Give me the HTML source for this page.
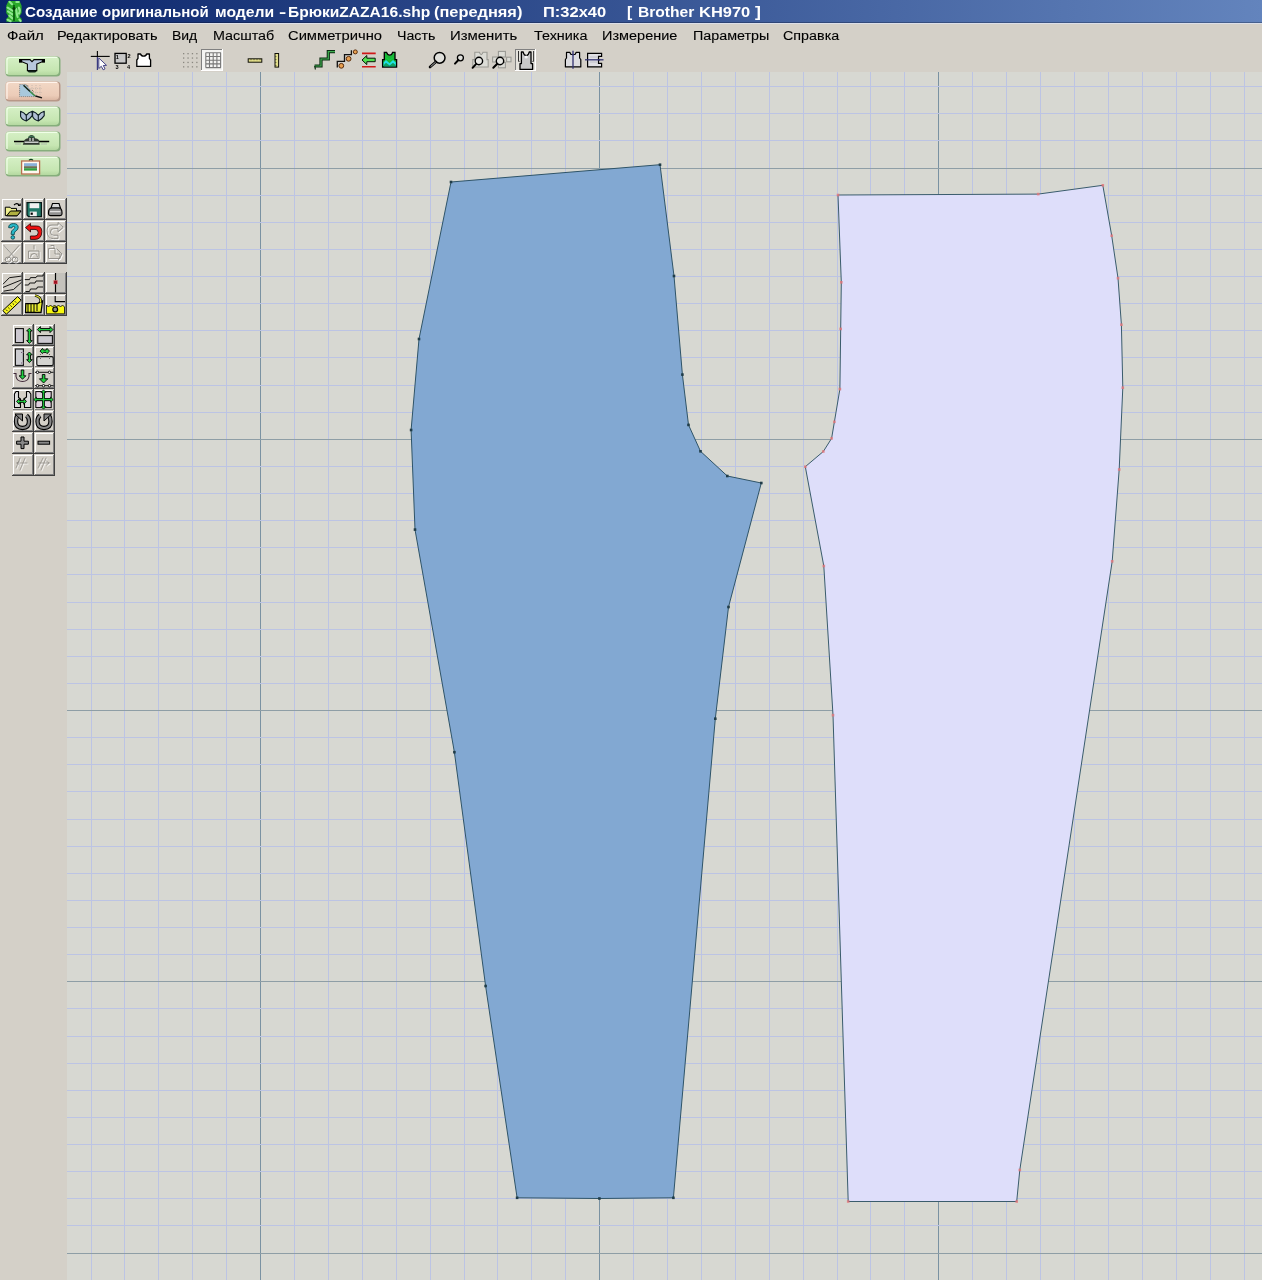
<!DOCTYPE html>
<html><head><meta charset="utf-8">
<style>
html,body{margin:0;padding:0;}
body{width:1262px;height:1280px;overflow:hidden;position:relative;background:#d4d0c8;font-family:"Liberation Sans",sans-serif;}
.abs{position:absolute;}
#title{left:0;top:0;width:1262px;height:22px;background:linear-gradient(to right,#0a246a 0%,#6384bd 100%);}
#tline{left:0;top:22px;width:1262px;height:1px;background:linear-gradient(to right,#081a50,#46608e);}
#tline2{left:0;top:23px;width:1262px;height:1px;background:#dcdfe8;}
#canvas{left:67px;top:72px;width:1195px;height:1208px;background:#d7d8d2;}
</style></head><body>
<div id="title" class="abs"></div>
<div id="tline" class="abs"></div><div id="tline2" class="abs"></div>
<div style="position:absolute;left:24.72px;top:5px;font-size:14px;font-weight:bold;line-height:1;white-space:pre;color:#fff;transform-origin:0 0;transform:scaleX(1.0833);will-change:transform;">Создание</div>
<div style="position:absolute;left:102.40px;top:5px;font-size:14px;font-weight:bold;line-height:1;white-space:pre;color:#fff;transform-origin:0 0;transform:scaleX(1.0717);will-change:transform;">оригинальной</div>
<div style="position:absolute;left:214.58px;top:5px;font-size:14px;font-weight:bold;line-height:1;white-space:pre;color:#fff;transform-origin:0 0;transform:scaleX(1.1235);will-change:transform;">модели</div>
<div style="position:absolute;left:279.30px;top:5px;font-size:14px;font-weight:bold;line-height:1;white-space:pre;color:#fff;transform-origin:0 0;transform:scaleX(1.5500);will-change:transform;">-</div>
<div style="position:absolute;left:288.49px;top:5px;font-size:14px;font-weight:bold;line-height:1;white-space:pre;color:#fff;transform-origin:0 0;transform:scaleX(1.1119);will-change:transform;">БрюкиZAZA16.shp</div>
<div style="position:absolute;left:433.63px;top:5px;font-size:14px;font-weight:bold;line-height:1;white-space:pre;color:#fff;transform-origin:0 0;transform:scaleX(1.1689);will-change:transform;">(передняя)</div>
<div style="position:absolute;left:542.82px;top:5px;font-size:14px;font-weight:bold;line-height:1;white-space:pre;color:#fff;transform-origin:0 0;transform:scaleX(1.1769);will-change:transform;">П:32x40</div>
<div style="position:absolute;left:627.38px;top:5px;font-size:14px;font-weight:bold;line-height:1;white-space:pre;color:#fff;transform-origin:0 0;transform:scaleX(1.1250);will-change:transform;">[</div>
<div style="position:absolute;left:638.09px;top:5px;font-size:14px;font-weight:bold;line-height:1;white-space:pre;color:#fff;transform-origin:0 0;transform:scaleX(1.1143);will-change:transform;">Brother</div>
<div style="position:absolute;left:698.82px;top:5px;font-size:14px;font-weight:bold;line-height:1;white-space:pre;color:#fff;transform-origin:0 0;transform:scaleX(1.1762);will-change:transform;">KH970</div>
<div style="position:absolute;left:754.60px;top:5px;font-size:14px;font-weight:bold;line-height:1;white-space:pre;color:#fff;transform-origin:0 0;transform:scaleX(1.2750);will-change:transform;">]</div>
<div style="position:absolute;left:6.55px;top:30px;font-size:12px;font-weight:normal;line-height:1;white-space:pre;color:#000;transform-origin:0 0;transform:scaleX(1.2464);will-change:transform;-webkit-text-stroke:0.1px #000">Файл</div>
<div style="position:absolute;left:57.19px;top:30px;font-size:12px;font-weight:normal;line-height:1;white-space:pre;color:#000;transform-origin:0 0;transform:scaleX(1.2122);will-change:transform;-webkit-text-stroke:0.1px #000">Редактировать</div>
<div style="position:absolute;left:172.34px;top:30px;font-size:12px;font-weight:normal;line-height:1;white-space:pre;color:#000;transform-origin:0 0;transform:scaleX(1.1619);will-change:transform;-webkit-text-stroke:0.1px #000">Вид</div>
<div style="position:absolute;left:212.71px;top:30px;font-size:12px;font-weight:normal;line-height:1;white-space:pre;color:#000;transform-origin:0 0;transform:scaleX(1.1920);will-change:transform;-webkit-text-stroke:0.1px #000">Масштаб</div>
<div style="position:absolute;left:287.97px;top:30px;font-size:12px;font-weight:normal;line-height:1;white-space:pre;color:#000;transform-origin:0 0;transform:scaleX(1.2280);will-change:transform;-webkit-text-stroke:0.1px #000">Симметрично</div>
<div style="position:absolute;left:396.62px;top:30px;font-size:12px;font-weight:normal;line-height:1;white-space:pre;color:#000;transform-origin:0 0;transform:scaleX(1.1839);will-change:transform;-webkit-text-stroke:0.1px #000">Часть</div>
<div style="position:absolute;left:449.76px;top:30px;font-size:12px;font-weight:normal;line-height:1;white-space:pre;color:#000;transform-origin:0 0;transform:scaleX(1.2434);will-change:transform;-webkit-text-stroke:0.1px #000">Изменить</div>
<div style="position:absolute;left:533.60px;top:30px;font-size:12px;font-weight:normal;line-height:1;white-space:pre;color:#000;transform-origin:0 0;transform:scaleX(1.1978);will-change:transform;-webkit-text-stroke:0.1px #000">Техника</div>
<div style="position:absolute;left:601.99px;top:30px;font-size:12px;font-weight:normal;line-height:1;white-space:pre;color:#000;transform-origin:0 0;transform:scaleX(1.2082);will-change:transform;-webkit-text-stroke:0.1px #000">Измерение</div>
<div style="position:absolute;left:692.71px;top:30px;font-size:12px;font-weight:normal;line-height:1;white-space:pre;color:#000;transform-origin:0 0;transform:scaleX(1.1935);will-change:transform;-webkit-text-stroke:0.1px #000">Параметры</div>
<div style="position:absolute;left:782.91px;top:30px;font-size:12px;font-weight:normal;line-height:1;white-space:pre;color:#000;transform-origin:0 0;transform:scaleX(1.1935);will-change:transform;-webkit-text-stroke:0.1px #000">Справка</div>
<div id="canvas" class="abs"><svg width="1195" height="1208" style="position:absolute;left:0;top:0">
<g shape-rendering="crispEdges"><rect x="24" y="0" width="1" height="1208" fill="#bcc4e4"/>
<rect x="57" y="0" width="1" height="1208" fill="#bcc4e4"/>
<rect x="91" y="0" width="1" height="1208" fill="#bcc4e4"/>
<rect x="125" y="0" width="1" height="1208" fill="#bcc4e4"/>
<rect x="159" y="0" width="1" height="1208" fill="#bcc4e4"/>
<rect x="193" y="0" width="1" height="1208" fill="#7a92a2"/>
<rect x="227" y="0" width="1" height="1208" fill="#bcc4e4"/>
<rect x="261" y="0" width="1" height="1208" fill="#bcc4e4"/>
<rect x="295" y="0" width="1" height="1208" fill="#bcc4e4"/>
<rect x="329" y="0" width="1" height="1208" fill="#bcc4e4"/>
<rect x="363" y="0" width="1" height="1208" fill="#bcc4e4"/>
<rect x="397" y="0" width="1" height="1208" fill="#bcc4e4"/>
<rect x="430" y="0" width="1" height="1208" fill="#bcc4e4"/>
<rect x="464" y="0" width="1" height="1208" fill="#bcc4e4"/>
<rect x="498" y="0" width="1" height="1208" fill="#bcc4e4"/>
<rect x="532" y="0" width="1" height="1208" fill="#7a92a2"/>
<rect x="566" y="0" width="1" height="1208" fill="#bcc4e4"/>
<rect x="600" y="0" width="1" height="1208" fill="#bcc4e4"/>
<rect x="634" y="0" width="1" height="1208" fill="#bcc4e4"/>
<rect x="668" y="0" width="1" height="1208" fill="#bcc4e4"/>
<rect x="702" y="0" width="1" height="1208" fill="#bcc4e4"/>
<rect x="736" y="0" width="1" height="1208" fill="#bcc4e4"/>
<rect x="770" y="0" width="1" height="1208" fill="#bcc4e4"/>
<rect x="803" y="0" width="1" height="1208" fill="#bcc4e4"/>
<rect x="837" y="0" width="1" height="1208" fill="#bcc4e4"/>
<rect x="871" y="0" width="1" height="1208" fill="#7a92a2"/>
<rect x="905" y="0" width="1" height="1208" fill="#bcc4e4"/>
<rect x="939" y="0" width="1" height="1208" fill="#bcc4e4"/>
<rect x="973" y="0" width="1" height="1208" fill="#bcc4e4"/>
<rect x="1007" y="0" width="1" height="1208" fill="#bcc4e4"/>
<rect x="1041" y="0" width="1" height="1208" fill="#bcc4e4"/>
<rect x="1075" y="0" width="1" height="1208" fill="#bcc4e4"/>
<rect x="1109" y="0" width="1" height="1208" fill="#bcc4e4"/>
<rect x="1143" y="0" width="1" height="1208" fill="#bcc4e4"/>
<rect x="1177" y="0" width="1" height="1208" fill="#bcc4e4"/>
<rect x="0" y="14" width="1195" height="1" fill="#bcc4e4"/>
<rect x="0" y="41" width="1195" height="1" fill="#bcc4e4"/>
<rect x="0" y="68" width="1195" height="1" fill="#bcc4e4"/>
<rect x="0" y="96" width="1195" height="1" fill="#8e9ea6"/>
<rect x="0" y="123" width="1195" height="1" fill="#bcc4e4"/>
<rect x="0" y="150" width="1195" height="1" fill="#bcc4e4"/>
<rect x="0" y="177" width="1195" height="1" fill="#bcc4e4"/>
<rect x="0" y="204" width="1195" height="1" fill="#bcc4e4"/>
<rect x="0" y="231" width="1195" height="1" fill="#bcc4e4"/>
<rect x="0" y="258" width="1195" height="1" fill="#bcc4e4"/>
<rect x="0" y="285" width="1195" height="1" fill="#bcc4e4"/>
<rect x="0" y="313" width="1195" height="1" fill="#bcc4e4"/>
<rect x="0" y="340" width="1195" height="1" fill="#bcc4e4"/>
<rect x="0" y="367" width="1195" height="1" fill="#8e9ea6"/>
<rect x="0" y="394" width="1195" height="1" fill="#bcc4e4"/>
<rect x="0" y="421" width="1195" height="1" fill="#bcc4e4"/>
<rect x="0" y="448" width="1195" height="1" fill="#bcc4e4"/>
<rect x="0" y="475" width="1195" height="1" fill="#bcc4e4"/>
<rect x="0" y="502" width="1195" height="1" fill="#bcc4e4"/>
<rect x="0" y="530" width="1195" height="1" fill="#bcc4e4"/>
<rect x="0" y="557" width="1195" height="1" fill="#bcc4e4"/>
<rect x="0" y="584" width="1195" height="1" fill="#bcc4e4"/>
<rect x="0" y="611" width="1195" height="1" fill="#bcc4e4"/>
<rect x="0" y="638" width="1195" height="1" fill="#8e9ea6"/>
<rect x="0" y="665" width="1195" height="1" fill="#bcc4e4"/>
<rect x="0" y="692" width="1195" height="1" fill="#bcc4e4"/>
<rect x="0" y="719" width="1195" height="1" fill="#bcc4e4"/>
<rect x="0" y="747" width="1195" height="1" fill="#bcc4e4"/>
<rect x="0" y="774" width="1195" height="1" fill="#bcc4e4"/>
<rect x="0" y="801" width="1195" height="1" fill="#bcc4e4"/>
<rect x="0" y="828" width="1195" height="1" fill="#bcc4e4"/>
<rect x="0" y="855" width="1195" height="1" fill="#bcc4e4"/>
<rect x="0" y="882" width="1195" height="1" fill="#bcc4e4"/>
<rect x="0" y="909" width="1195" height="1" fill="#8e9ea6"/>
<rect x="0" y="936" width="1195" height="1" fill="#bcc4e4"/>
<rect x="0" y="964" width="1195" height="1" fill="#bcc4e4"/>
<rect x="0" y="991" width="1195" height="1" fill="#bcc4e4"/>
<rect x="0" y="1018" width="1195" height="1" fill="#bcc4e4"/>
<rect x="0" y="1045" width="1195" height="1" fill="#bcc4e4"/>
<rect x="0" y="1072" width="1195" height="1" fill="#bcc4e4"/>
<rect x="0" y="1099" width="1195" height="1" fill="#bcc4e4"/>
<rect x="0" y="1126" width="1195" height="1" fill="#bcc4e4"/>
<rect x="0" y="1153" width="1195" height="1" fill="#bcc4e4"/>
<rect x="0" y="1181" width="1195" height="1" fill="#8e9ea6"/></g>
<polygon points="384.0,110.0 593.0,92.7 607.0,204.0 615.4,302.6 621.5,352.9 633.5,379.3 660.3,404.0 694.3,411.0 661.5,535.0 648.3,646.7 606.4,1125.8 532.4,1126.5 450.1,1125.8 418.6,914.0 387.4,680.2 348.0,457.6 344.1,358.0 352.0,267.0" fill="#82a8d2" stroke="#2f5468" stroke-width="1"/>
<rect x="382.7" y="108.7" width="2.6" height="2.6" fill="#203c48" opacity="1"/>
<rect x="591.7" y="91.4" width="2.6" height="2.6" fill="#203c48" opacity="1"/>
<rect x="605.7" y="202.7" width="2.6" height="2.6" fill="#203c48" opacity="1"/>
<rect x="614.1" y="301.3" width="2.6" height="2.6" fill="#203c48" opacity="1"/>
<rect x="620.2" y="351.6" width="2.6" height="2.6" fill="#203c48" opacity="1"/>
<rect x="632.2" y="378.0" width="2.6" height="2.6" fill="#203c48" opacity="1"/>
<rect x="659.0" y="402.7" width="2.6" height="2.6" fill="#203c48" opacity="1"/>
<rect x="693.0" y="409.7" width="2.6" height="2.6" fill="#203c48" opacity="1"/>
<rect x="660.2" y="533.7" width="2.6" height="2.6" fill="#203c48" opacity="1"/>
<rect x="647.0" y="645.4" width="2.6" height="2.6" fill="#203c48" opacity="1"/>
<rect x="605.1" y="1124.5" width="2.6" height="2.6" fill="#203c48" opacity="1"/>
<rect x="531.1" y="1125.2" width="2.6" height="2.6" fill="#203c48" opacity="1"/>
<rect x="448.8" y="1124.5" width="2.6" height="2.6" fill="#203c48" opacity="1"/>
<rect x="417.3" y="912.7" width="2.6" height="2.6" fill="#203c48" opacity="1"/>
<rect x="386.1" y="678.9" width="2.6" height="2.6" fill="#203c48" opacity="1"/>
<rect x="346.7" y="456.3" width="2.6" height="2.6" fill="#203c48" opacity="1"/>
<rect x="342.8" y="356.7" width="2.6" height="2.6" fill="#203c48" opacity="1"/>
<rect x="350.7" y="265.7" width="2.6" height="2.6" fill="#203c48" opacity="1"/>
<polygon points="771.0,123.0 971.2,122.1 1035.8,113.3 1044.7,163.7 1051.0,206.2 1054.4,252.7 1055.8,315.7 1052.2,397.5 1045.2,489.3 952.8,1098.0 949.7,1129.5 781.2,1129.5 766.0,643.2 756.8,494.0 738.3,394.7 756.3,379.5 764.6,366.4 767.4,349.8 772.9,317.1 773.7,256.9 774.3,210.3" fill="#dedefa" stroke="#3a5c6c" stroke-width="1"/>
<rect x="769.7" y="121.7" width="2.6" height="2.6" fill="#e47478" opacity="0.8"/>
<rect x="969.9" y="120.8" width="2.6" height="2.6" fill="#e47478" opacity="0.8"/>
<rect x="1034.5" y="112.0" width="2.6" height="2.6" fill="#e47478" opacity="0.8"/>
<rect x="1043.4" y="162.4" width="2.6" height="2.6" fill="#e47478" opacity="0.8"/>
<rect x="1049.7" y="204.9" width="2.6" height="2.6" fill="#e47478" opacity="0.8"/>
<rect x="1053.1" y="251.4" width="2.6" height="2.6" fill="#e47478" opacity="0.8"/>
<rect x="1054.5" y="314.4" width="2.6" height="2.6" fill="#e47478" opacity="0.8"/>
<rect x="1050.9" y="396.2" width="2.6" height="2.6" fill="#e47478" opacity="0.8"/>
<rect x="1043.9" y="488.0" width="2.6" height="2.6" fill="#e47478" opacity="0.8"/>
<rect x="951.5" y="1096.7" width="2.6" height="2.6" fill="#e47478" opacity="0.8"/>
<rect x="948.4" y="1128.2" width="2.6" height="2.6" fill="#e47478" opacity="0.8"/>
<rect x="779.9" y="1128.2" width="2.6" height="2.6" fill="#e47478" opacity="0.8"/>
<rect x="764.7" y="641.9" width="2.6" height="2.6" fill="#e47478" opacity="0.8"/>
<rect x="755.5" y="492.7" width="2.6" height="2.6" fill="#e47478" opacity="0.8"/>
<rect x="737.0" y="393.4" width="2.6" height="2.6" fill="#e47478" opacity="0.8"/>
<rect x="755.0" y="378.2" width="2.6" height="2.6" fill="#e47478" opacity="0.8"/>
<rect x="763.3" y="365.1" width="2.6" height="2.6" fill="#e47478" opacity="0.8"/>
<rect x="766.1" y="348.5" width="2.6" height="2.6" fill="#e47478" opacity="0.8"/>
<rect x="771.6" y="315.8" width="2.6" height="2.6" fill="#e47478" opacity="0.8"/>
<rect x="772.4" y="255.6" width="2.6" height="2.6" fill="#e47478" opacity="0.8"/>
<rect x="773.0" y="209.0" width="2.6" height="2.6" fill="#e47478" opacity="0.8"/>
</svg></div>
<svg width="1262" height="1280" style="position:absolute;left:0;top:0;will-change:transform"><defs>
<linearGradient id="gg" x1="0" y1="0" x2="0" y2="1"><stop offset="0" stop-color="#d6f0c6"/><stop offset="0.75" stop-color="#c6e6b2"/><stop offset="1" stop-color="#b4d8a0"/></linearGradient>
<linearGradient id="gp" x1="0" y1="0" x2="0" y2="1"><stop offset="0" stop-color="#f2d8c6"/><stop offset="0.75" stop-color="#ecccb8"/><stop offset="1" stop-color="#dcb8a4"/></linearGradient>
</defs>
<rect x="5.5" y="56.5" width="55" height="20" rx="4" fill="#86ae7c"/><rect x="5.5" y="56.5" width="53.5" height="18.5" rx="4" fill="url(#gg)"/><path d="M7 74 V60 Q7 57.5 10 57.5 H57" stroke="#f0ffe8" stroke-width="1.2" fill="none"/>
<rect x="5.5" y="81.5" width="55" height="20" rx="4" fill="#b89888"/><rect x="5.5" y="81.5" width="53.5" height="18.5" rx="4" fill="url(#gp)"/><path d="M7 99 V85 Q7 82.5 10 82.5 H57" stroke="#fff4ec" stroke-width="1.2" fill="none"/>
<rect x="5.5" y="106.5" width="55" height="20" rx="4" fill="#86ae7c"/><rect x="5.5" y="106.5" width="53.5" height="18.5" rx="4" fill="url(#gg)"/><path d="M7 124 V110 Q7 107.5 10 107.5 H57" stroke="#f0ffe8" stroke-width="1.2" fill="none"/>
<rect x="5.5" y="131.5" width="55" height="20" rx="4" fill="#86ae7c"/><rect x="5.5" y="131.5" width="53.5" height="18.5" rx="4" fill="url(#gg)"/><path d="M7 149 V135 Q7 132.5 10 132.5 H57" stroke="#f0ffe8" stroke-width="1.2" fill="none"/>
<rect x="5.5" y="156.5" width="55" height="20" rx="4" fill="#86ae7c"/><rect x="5.5" y="156.5" width="53.5" height="18.5" rx="4" fill="url(#gg)"/><path d="M7 174 V160 Q7 157.5 10 157.5 H57" stroke="#f0ffe8" stroke-width="1.2" fill="none"/>
<rect x="1" y="198" width="22" height="22" fill="#d4d0c8"/><rect x="2" y="199" width="20" height="1" fill="#fff"/><rect x="2" y="199" width="1" height="20" fill="#fff"/><rect x="2" y="218" width="20" height="1" fill="#808080"/><rect x="21" y="199" width="1" height="20" fill="#808080"/><rect x="1" y="219" width="22" height="1" fill="#404040"/><rect x="22" y="198" width="1" height="22" fill="#404040"/>
<rect x="23" y="198" width="22" height="22" fill="#d4d0c8"/><rect x="24" y="199" width="20" height="1" fill="#fff"/><rect x="24" y="199" width="1" height="20" fill="#fff"/><rect x="24" y="218" width="20" height="1" fill="#808080"/><rect x="43" y="199" width="1" height="20" fill="#808080"/><rect x="23" y="219" width="22" height="1" fill="#404040"/><rect x="44" y="198" width="1" height="22" fill="#404040"/>
<rect x="45" y="198" width="22" height="22" fill="#d4d0c8"/><rect x="46" y="199" width="20" height="1" fill="#fff"/><rect x="46" y="199" width="1" height="20" fill="#fff"/><rect x="46" y="218" width="20" height="1" fill="#808080"/><rect x="65" y="199" width="1" height="20" fill="#808080"/><rect x="45" y="219" width="22" height="1" fill="#404040"/><rect x="66" y="198" width="1" height="22" fill="#404040"/>
<rect x="1" y="220" width="22" height="22" fill="#d4d0c8"/><rect x="2" y="221" width="20" height="1" fill="#fff"/><rect x="2" y="221" width="1" height="20" fill="#fff"/><rect x="2" y="240" width="20" height="1" fill="#808080"/><rect x="21" y="221" width="1" height="20" fill="#808080"/><rect x="1" y="241" width="22" height="1" fill="#404040"/><rect x="22" y="220" width="1" height="22" fill="#404040"/>
<rect x="23" y="220" width="22" height="22" fill="#d4d0c8"/><rect x="24" y="221" width="20" height="1" fill="#fff"/><rect x="24" y="221" width="1" height="20" fill="#fff"/><rect x="24" y="240" width="20" height="1" fill="#808080"/><rect x="43" y="221" width="1" height="20" fill="#808080"/><rect x="23" y="241" width="22" height="1" fill="#404040"/><rect x="44" y="220" width="1" height="22" fill="#404040"/>
<rect x="45" y="220" width="22" height="22" fill="#d4d0c8"/><rect x="46" y="221" width="20" height="1" fill="#fff"/><rect x="46" y="221" width="1" height="20" fill="#fff"/><rect x="46" y="240" width="20" height="1" fill="#808080"/><rect x="65" y="221" width="1" height="20" fill="#808080"/><rect x="45" y="241" width="22" height="1" fill="#404040"/><rect x="66" y="220" width="1" height="22" fill="#404040"/>
<rect x="1" y="242" width="22" height="22" fill="#d4d0c8"/><rect x="2" y="243" width="20" height="1" fill="#fff"/><rect x="2" y="243" width="1" height="20" fill="#fff"/><rect x="2" y="262" width="20" height="1" fill="#808080"/><rect x="21" y="243" width="1" height="20" fill="#808080"/><rect x="1" y="263" width="22" height="1" fill="#404040"/><rect x="22" y="242" width="1" height="22" fill="#404040"/>
<rect x="23" y="242" width="22" height="22" fill="#d4d0c8"/><rect x="24" y="243" width="20" height="1" fill="#fff"/><rect x="24" y="243" width="1" height="20" fill="#fff"/><rect x="24" y="262" width="20" height="1" fill="#808080"/><rect x="43" y="243" width="1" height="20" fill="#808080"/><rect x="23" y="263" width="22" height="1" fill="#404040"/><rect x="44" y="242" width="1" height="22" fill="#404040"/>
<rect x="45" y="242" width="22" height="22" fill="#d4d0c8"/><rect x="46" y="243" width="20" height="1" fill="#fff"/><rect x="46" y="243" width="1" height="20" fill="#fff"/><rect x="46" y="262" width="20" height="1" fill="#808080"/><rect x="65" y="243" width="1" height="20" fill="#808080"/><rect x="45" y="263" width="22" height="1" fill="#404040"/><rect x="66" y="242" width="1" height="22" fill="#404040"/>
<rect x="1" y="272" width="22" height="22" fill="#d4d0c8"/><rect x="2" y="273" width="20" height="1" fill="#fff"/><rect x="2" y="273" width="1" height="20" fill="#fff"/><rect x="2" y="292" width="20" height="1" fill="#808080"/><rect x="21" y="273" width="1" height="20" fill="#808080"/><rect x="1" y="293" width="22" height="1" fill="#404040"/><rect x="22" y="272" width="1" height="22" fill="#404040"/>
<rect x="23" y="272" width="22" height="22" fill="#d4d0c8"/><rect x="24" y="273" width="20" height="1" fill="#fff"/><rect x="24" y="273" width="1" height="20" fill="#fff"/><rect x="24" y="292" width="20" height="1" fill="#808080"/><rect x="43" y="273" width="1" height="20" fill="#808080"/><rect x="23" y="293" width="22" height="1" fill="#404040"/><rect x="44" y="272" width="1" height="22" fill="#404040"/>
<rect x="45" y="272" width="22" height="22" fill="#d4d0c8"/><rect x="46" y="273" width="20" height="1" fill="#fff"/><rect x="46" y="273" width="1" height="20" fill="#fff"/><rect x="46" y="292" width="20" height="1" fill="#808080"/><rect x="65" y="273" width="1" height="20" fill="#808080"/><rect x="45" y="293" width="22" height="1" fill="#404040"/><rect x="66" y="272" width="1" height="22" fill="#404040"/>
<rect x="1" y="294" width="22" height="22" fill="#d4d0c8"/><rect x="2" y="295" width="20" height="1" fill="#fff"/><rect x="2" y="295" width="1" height="20" fill="#fff"/><rect x="2" y="314" width="20" height="1" fill="#808080"/><rect x="21" y="295" width="1" height="20" fill="#808080"/><rect x="1" y="315" width="22" height="1" fill="#404040"/><rect x="22" y="294" width="1" height="22" fill="#404040"/>
<rect x="23" y="294" width="22" height="22" fill="#d4d0c8"/><rect x="24" y="295" width="20" height="1" fill="#fff"/><rect x="24" y="295" width="1" height="20" fill="#fff"/><rect x="24" y="314" width="20" height="1" fill="#808080"/><rect x="43" y="295" width="1" height="20" fill="#808080"/><rect x="23" y="315" width="22" height="1" fill="#404040"/><rect x="44" y="294" width="1" height="22" fill="#404040"/>
<rect x="45" y="294" width="22" height="22" fill="#d4d0c8"/><rect x="46" y="295" width="20" height="1" fill="#fff"/><rect x="46" y="295" width="1" height="20" fill="#fff"/><rect x="46" y="314" width="20" height="1" fill="#808080"/><rect x="65" y="295" width="1" height="20" fill="#808080"/><rect x="45" y="315" width="22" height="1" fill="#404040"/><rect x="66" y="294" width="1" height="22" fill="#404040"/>
<rect x="12" y="324" width="22" height="22" fill="#d4d0c8"/><rect x="13" y="325" width="20" height="1" fill="#fff"/><rect x="13" y="325" width="1" height="20" fill="#fff"/><rect x="13" y="344" width="20" height="1" fill="#808080"/><rect x="32" y="325" width="1" height="20" fill="#808080"/><rect x="12" y="345" width="22" height="1" fill="#404040"/><rect x="33" y="324" width="1" height="22" fill="#404040"/>
<rect x="34" y="324" width="21" height="22" fill="#d4d0c8"/><rect x="35" y="325" width="19" height="1" fill="#fff"/><rect x="35" y="325" width="1" height="20" fill="#fff"/><rect x="35" y="344" width="19" height="1" fill="#808080"/><rect x="53" y="325" width="1" height="20" fill="#808080"/><rect x="34" y="345" width="21" height="1" fill="#404040"/><rect x="54" y="324" width="1" height="22" fill="#404040"/>
<rect x="12" y="346" width="22" height="22" fill="#d4d0c8"/><rect x="13" y="347" width="20" height="1" fill="#fff"/><rect x="13" y="347" width="1" height="20" fill="#fff"/><rect x="13" y="366" width="20" height="1" fill="#808080"/><rect x="32" y="347" width="1" height="20" fill="#808080"/><rect x="12" y="367" width="22" height="1" fill="#404040"/><rect x="33" y="346" width="1" height="22" fill="#404040"/>
<rect x="34" y="346" width="21" height="22" fill="#d4d0c8"/><rect x="35" y="347" width="19" height="1" fill="#fff"/><rect x="35" y="347" width="1" height="20" fill="#fff"/><rect x="35" y="366" width="19" height="1" fill="#808080"/><rect x="53" y="347" width="1" height="20" fill="#808080"/><rect x="34" y="367" width="21" height="1" fill="#404040"/><rect x="54" y="346" width="1" height="22" fill="#404040"/>
<rect x="12" y="367" width="22" height="22" fill="#d4d0c8"/><rect x="13" y="368" width="20" height="1" fill="#fff"/><rect x="13" y="368" width="1" height="20" fill="#fff"/><rect x="13" y="387" width="20" height="1" fill="#808080"/><rect x="32" y="368" width="1" height="20" fill="#808080"/><rect x="12" y="388" width="22" height="1" fill="#404040"/><rect x="33" y="367" width="1" height="22" fill="#404040"/>
<rect x="34" y="367" width="21" height="22" fill="#d4d0c8"/><rect x="35" y="368" width="19" height="1" fill="#fff"/><rect x="35" y="368" width="1" height="20" fill="#fff"/><rect x="35" y="387" width="19" height="1" fill="#808080"/><rect x="53" y="368" width="1" height="20" fill="#808080"/><rect x="34" y="388" width="21" height="1" fill="#404040"/><rect x="54" y="367" width="1" height="22" fill="#404040"/>
<rect x="12" y="389" width="22" height="22" fill="#d4d0c8"/><rect x="13" y="390" width="20" height="1" fill="#fff"/><rect x="13" y="390" width="1" height="20" fill="#fff"/><rect x="13" y="409" width="20" height="1" fill="#808080"/><rect x="32" y="390" width="1" height="20" fill="#808080"/><rect x="12" y="410" width="22" height="1" fill="#404040"/><rect x="33" y="389" width="1" height="22" fill="#404040"/>
<rect x="34" y="389" width="21" height="22" fill="#d4d0c8"/><rect x="35" y="390" width="19" height="1" fill="#fff"/><rect x="35" y="390" width="1" height="20" fill="#fff"/><rect x="35" y="409" width="19" height="1" fill="#808080"/><rect x="53" y="390" width="1" height="20" fill="#808080"/><rect x="34" y="410" width="21" height="1" fill="#404040"/><rect x="54" y="389" width="1" height="22" fill="#404040"/>
<rect x="12" y="410" width="22" height="22" fill="#d4d0c8"/><rect x="13" y="411" width="20" height="1" fill="#fff"/><rect x="13" y="411" width="1" height="20" fill="#fff"/><rect x="13" y="430" width="20" height="1" fill="#808080"/><rect x="32" y="411" width="1" height="20" fill="#808080"/><rect x="12" y="431" width="22" height="1" fill="#404040"/><rect x="33" y="410" width="1" height="22" fill="#404040"/>
<rect x="34" y="410" width="21" height="22" fill="#d4d0c8"/><rect x="35" y="411" width="19" height="1" fill="#fff"/><rect x="35" y="411" width="1" height="20" fill="#fff"/><rect x="35" y="430" width="19" height="1" fill="#808080"/><rect x="53" y="411" width="1" height="20" fill="#808080"/><rect x="34" y="431" width="21" height="1" fill="#404040"/><rect x="54" y="410" width="1" height="22" fill="#404040"/>
<rect x="12" y="432" width="22" height="22" fill="#d4d0c8"/><rect x="13" y="433" width="20" height="1" fill="#fff"/><rect x="13" y="433" width="1" height="20" fill="#fff"/><rect x="13" y="452" width="20" height="1" fill="#808080"/><rect x="32" y="433" width="1" height="20" fill="#808080"/><rect x="12" y="453" width="22" height="1" fill="#404040"/><rect x="33" y="432" width="1" height="22" fill="#404040"/>
<rect x="34" y="432" width="21" height="22" fill="#d4d0c8"/><rect x="35" y="433" width="19" height="1" fill="#fff"/><rect x="35" y="433" width="1" height="20" fill="#fff"/><rect x="35" y="452" width="19" height="1" fill="#808080"/><rect x="53" y="433" width="1" height="20" fill="#808080"/><rect x="34" y="453" width="21" height="1" fill="#404040"/><rect x="54" y="432" width="1" height="22" fill="#404040"/>
<rect x="12" y="454" width="22" height="22" fill="#d4d0c8"/><rect x="13" y="455" width="20" height="1" fill="#fff"/><rect x="13" y="455" width="1" height="20" fill="#fff"/><rect x="13" y="474" width="20" height="1" fill="#808080"/><rect x="32" y="455" width="1" height="20" fill="#808080"/><rect x="12" y="475" width="22" height="1" fill="#404040"/><rect x="33" y="454" width="1" height="22" fill="#404040"/>
<rect x="34" y="454" width="21" height="22" fill="#d4d0c8"/><rect x="35" y="455" width="19" height="1" fill="#fff"/><rect x="35" y="455" width="1" height="20" fill="#fff"/><rect x="35" y="474" width="19" height="1" fill="#808080"/><rect x="53" y="455" width="1" height="20" fill="#808080"/><rect x="34" y="475" width="21" height="1" fill="#404040"/><rect x="54" y="454" width="1" height="22" fill="#404040"/>
<rect x="201" y="49" width="22" height="22" fill="#e8e6e0"/><rect x="201" y="49" width="22" height="1" fill="#808080"/><rect x="201" y="49" width="1" height="22" fill="#808080"/><rect x="201" y="70" width="22" height="1" fill="#fff"/><rect x="222" y="49" width="1" height="22" fill="#fff"/>
<rect x="515" y="49" width="21" height="22" fill="#e8e6e0"/><rect x="515" y="49" width="21" height="1" fill="#808080"/><rect x="515" y="49" width="1" height="22" fill="#808080"/><rect x="515" y="70" width="21" height="1" fill="#fff"/><rect x="535" y="49" width="1" height="22" fill="#fff"/>
<path d="M19.6 59.6 H30 L32 61.6 L34 59.6 H44.4 V62 H41.5 L36.8 64 V70.6 H27.4 V64 L22.6 62 H19.6 Z" fill="#b8c8dc" stroke="#000" stroke-width="1.1"/>
<rect x="19" y="59" width="3.2" height="3.3" fill="#000"/><rect x="41.8" y="59" width="3.2" height="3.3" fill="#000"/>
<path d="M27.8 70.4 H36.4 V71.6 Q36 72.6 34.5 72.6 H29.7 Q28 72.6 27.8 71.6 Z" fill="#102018"/>
<g stroke="#b8b0a8" stroke-width="0.7" stroke-dasharray="1 1.2" fill="none"><path d="M28 85 V97 M32 85 V97 M36 85 V97 M40 85 V97 M19.5 88.5 H42 M19.5 92.5 H42"/></g>
<path d="M19.6 84.6 H25.5 L36 96.6 H19.6 Z" fill="#a8c8dc" stroke="#707070" stroke-width="0.8" stroke-dasharray="1 1"/>
<path d="M23.5 85.2 L30 91.5" stroke="#102010" stroke-width="1.4"/><path d="M30 91.5 L35 96" stroke="#3a8a40" stroke-width="1.4"/><path d="M35.5 96 L42 97.8" stroke="#101010" stroke-width="1.4"/>
<path d="M26 84.5 L28 86.5 M32 90 L33.5 91.5" stroke="#60604a" stroke-width="0.8"/>
<g transform="translate(0,0)"><path d="M20.6 111.2 Q24 112.2 26.3 115.4 Q28.4 112.2 32.2 111.2 V115.6 Q29.5 119.6 26.3 121 Q21.5 119.6 20.6 116.4 Z" fill="#b0c0d4" stroke="#0a1a20" stroke-width="1.1" stroke-linejoin="round"/><path d="M26.3 115.4 V121" stroke="#0a1a20" stroke-width="1.1"/></g>
<g transform="translate(12,0)"><path d="M20.6 111.2 Q24 112.2 26.3 115.4 Q28.4 112.2 32.2 111.2 V115.6 Q29.5 119.6 26.3 121 Q21.5 119.6 20.6 116.4 Z" fill="#b0c0d4" stroke="#0a1a20" stroke-width="1.1" stroke-linejoin="round"/><path d="M26.3 115.4 V121" stroke="#0a1a20" stroke-width="1.1"/></g>
<g stroke="#a8b0a8" stroke-width="0.8"><path d="M16 142.5 V145 M18 142.5 V145 M20 142.5 V145 M42 142.5 V145 M44 142.5 V145 M46 142.5 V145"/></g>
<path d="M14 141.5 H49.2" stroke="#000" stroke-width="1.3"/>
<path d="M22.8 144.8 L24.5 140 Q26 138.5 28 138.2 Q29 135 31.5 135 Q34 135 35 138.2 Q37.5 138.5 39 140 L39.7 144.8 Z" fill="#303830"/>
<path d="M28.5 137.5 Q31.5 134.8 34.5 137.5" stroke="#3a7050" stroke-width="1.4" fill="none"/>
<path d="M24.5 142.2 H38.5" stroke="#f0f0f0" stroke-width="1.2"/><path d="M30 138 V141 M33 138 V141" stroke="#e8e8e8" stroke-width="1.2"/>
<path d="M29 160.5 Q31 158.2 33 160.5" stroke="#104020" stroke-width="1.3" fill="none"/>
<rect x="21.6" y="161" width="18" height="13" fill="#fff8f0" stroke="#b87050" stroke-width="1.3"/>
<rect x="24" y="163.2" width="13" height="3" fill="#8ab0d8"/><rect x="24" y="166.2" width="13" height="2" fill="#6a7058"/><rect x="24" y="168.2" width="13" height="2.4" fill="#30a040"/>
<path d="M5.3 215.6 V207.2 H10 L11 208.4 H16.5 V211 H21 L17 215.8 Z" fill="#f0f090" stroke="#000" stroke-width="1"/>
<path d="M6.6 215.8 L10.5 211 H21 L17.2 215.8 Z" fill="#b0b040" stroke="#000" stroke-width="1"/>
<path d="M14 205 Q17 202 19.5 205.5 M18 205.5 H20.2 V203.5" stroke="#000" stroke-width="1.1" fill="none"/>
<path d="M27 202.6 H41.4 V216.6 H28.5 L27 215 Z" fill="#207868" stroke="#081818" stroke-width="1.2"/>
<rect x="29.6" y="203.2" width="9.6" height="5" fill="#f0f0f0"/><rect x="29.8" y="211.6" width="7" height="4.6" fill="#f0f0f0"/><rect x="30.6" y="212.6" width="2.2" height="2.2" fill="#000"/>
<path d="M51 208 L52.5 203.5 H59 L60.5 208 Z" fill="#d8d8d8" stroke="#000" stroke-width="1.1"/>
<path d="M48.5 212.5 Q48.5 208 52 208 H58.5 Q62 208 62 212.5 V214 Q62 215.6 60 215.6 H50.5 Q48.5 215.6 48.5 214 Z" fill="#909090" stroke="#000" stroke-width="1.1"/>
<path d="M50 211.6 H60.5" stroke="#e0e0e0" stroke-width="1.3"/>
<path d="M8.6 227.6 Q8.8 223.6 13.4 223.6 Q18.2 223.6 18.2 227.4 Q18.2 229.8 15.8 231 Q14.4 231.8 14.4 233.6 V234.4 H11.2 V233.2 Q11.2 230.6 13.4 229.2 Q14.8 228.4 14.8 227.4 Q14.8 226.4 13.4 226.4 Q12 226.4 11.8 228 Z" fill="#28b8c8" stroke="#0a4a50" stroke-width="0.9"/><circle cx="12.8" cy="237.4" r="1.8" fill="#28b8c8" stroke="#0a4a50" stroke-width="0.9"/>
<path d="M25.5 227.6 L30.5 223.4 V226 H36.5 Q41.8 226 41.8 231.5 Q41.8 239.4 35 239.4 H30.4 V236 H35 Q38.2 236 38.2 232.6 Q38.2 229.4 35 229.4 H30.5 V232 Z" fill="#f01010" stroke="#200000" stroke-width="0.8" stroke-linejoin="round"/>
<g fill="none" stroke-width="0.9" stroke-linejoin="round" stroke-linecap="round"><path d="M63 227 L58 222.5 V225 H52 Q47 225 47 230.5 Q47 238.6 53.5 238.6 H58 V235.2 H53.5 Q50.5 235.2 50.5 232 Q50.5 228.6 53.5 228.6 H58 V231.4 Z" stroke="#fff" transform="translate(1,1)"/><path d="M63 227 L58 222.5 V225 H52 Q47 225 47 230.5 Q47 238.6 53.5 238.6 H58 V235.2 H53.5 Q50.5 235.2 50.5 232 Q50.5 228.6 53.5 228.6 H58 V231.4 Z" stroke="#8c8a84"/></g>
<g fill="none" stroke-width="0.9" stroke-linejoin="round" stroke-linecap="round"><path d="M4 245.5 L16 259 M19 245.5 L7 259 M8 259.5 m-3 0 a3 2.5 0 1 0 6 0 a3 2.5 0 1 0 -6 0 M15 259.5 m-3 0 a3 2.5 0 1 0 6 0 a3 2.5 0 1 0 -6 0" stroke="#fff" transform="translate(1,1)"/><path d="M4 245.5 L16 259 M19 245.5 L7 259 M8 259.5 m-3 0 a3 2.5 0 1 0 6 0 a3 2.5 0 1 0 -6 0 M15 259.5 m-3 0 a3 2.5 0 1 0 6 0 a3 2.5 0 1 0 -6 0" stroke="#8c8a84"/></g>
<g fill="none" stroke-width="0.9" stroke-linejoin="round" stroke-linecap="round"><path d="M34 245.5 V249 M29 251 H39 V258.5 H29 Z M30.5 257 a3.5 3.5 0 0 1 7 0" stroke="#fff" transform="translate(1,1)"/><path d="M34 245.5 V249 M29 251 H39 V258.5 H29 Z M30.5 257 a3.5 3.5 0 0 1 7 0" stroke="#8c8a84"/></g>
<g fill="none" stroke-width="0.9" stroke-linejoin="round" stroke-linecap="round"><path d="M49 248.5 H55 V254 H60 V258.5 H49 Z M51 245.5 H54 V248 M57 249 L62 254 L58.5 259.5" stroke="#fff" transform="translate(1,1)"/><path d="M49 248.5 H55 V254 H60 V258.5 H49 Z M51 245.5 H54 V248 M57 249 L62 254 L58.5 259.5" stroke="#8c8a84"/></g>
<g stroke="#000" stroke-width="0.9" fill="none"><path d="M3 284.2 L9.4 277.7 L21.5 276.1"/><path d="M3 287.4 L21.5 279.9"/><path d="M3.5 291.2 L13.5 289.5 L21.5 282.3"/><path d="M24.8 279.6 H29.5 L30.5 277.6 H36 L37 276 H43 L43.2 274.2"/><path d="M24.8 285 H28.6 L29.6 283 H35 L36 281 H43"/><path d="M25.5 291.5 H29.5 L30.5 289 H36.5 L37.5 287 H43"/></g>
<rect x="56" y="273" width="9" height="19" fill="#c4c2bc"/><path d="M55.5 273 V292.5" stroke="#000" stroke-width="1.2"/><rect x="53.8" y="280.4" width="3.6" height="3.6" fill="#a01020" stroke="#e08080" stroke-width="0.5"/>
<path d="M2.8 310.6 L17.6 296.6 L21.2 300.2 L6.4 314.2 Z" fill="#f4f420" stroke="#000" stroke-width="1"/>
<g stroke="#000" stroke-width="0.8"><path d="M6 309.6 L7.4 311 M8.2 307.5 L9.6 308.9 M10.4 305.4 L11.8 306.8 M12.6 303.3 L14 304.7 M14.8 301.2 L16.2 302.6"/></g>
<path d="M25.8 303.6 H37.5 L42.5 301 L41 312.5 H25.5 Z" fill="#e8ec30" stroke="#000" stroke-width="1.3"/>
<path d="M35 295.5 Q42 297 40.5 302.5" stroke="#000" stroke-width="2.6" fill="none"/><path d="M35 295.5 Q42 297 40.5 302.5" stroke="#e8ec30" stroke-width="1.2" fill="none"/>
<g stroke="#000" stroke-width="1"><path d="M28 304 V312 M31 304 V312 M34 304 V312 M37 304 V311"/></g>
<path d="M46.5 305 L48.5 307 L50.5 305 L52.5 307 L54.5 305 L56.5 307 L58.5 305 L60.5 307 L62.5 305 L64.5 307 V313.8 H46.5 Z" fill="#f8f810" stroke="#000" stroke-width="0.8"/>
<circle cx="55.2" cy="309.4" r="2.4" fill="#909088" stroke="#000" stroke-width="1.2"/>
<path d="M55.2 296 V301.6 H65" stroke="#000" stroke-width="1.1" fill="none"/>
<rect x="15.4" y="328.6" width="8" height="14" fill="#ccc8d0" stroke="#101010" stroke-width="1.1"/>
<path d="M29.4 328.2 L32.199999999999996 331.0 L30.599999999999998 331.0 L30.599999999999998 340.59999999999997 L32.199999999999996 340.59999999999997 L29.4 343.4 L26.599999999999998 340.59999999999997 L28.2 340.59999999999997 L28.2 331.0 L26.599999999999998 331.0 Z" fill="#20d040" stroke="#000" stroke-width="0.9" stroke-linejoin="round"/>
<path d="M37.4 329.6 L40.4 326.6 L40.4 328.5 L50 328.5 L50 326.6 L53 329.6 L50 332.6 L50 330.70000000000005 L40.4 330.70000000000005 L40.4 332.6 Z" fill="#20d040" stroke="#000" stroke-width="0.9" stroke-linejoin="round"/>
<rect x="37.8" y="335.6" width="14.6" height="7.8" fill="#ccc8d0" stroke="#101010" stroke-width="1.1"/>
<rect x="15.4" y="349" width="8" height="16.4" fill="#ccccd0" stroke="#101010" stroke-width="1.1"/>
<path d="M21 352.5 H25 M21 363 H25" stroke="#604060" stroke-width="0.8" stroke-dasharray="1 1"/>
<path d="M29.4 352 L32.199999999999996 354.8 L30.5 354.8 L30.5 359.7 L32.199999999999996 359.7 L29.4 362.5 L26.599999999999998 359.7 L28.299999999999997 359.7 L28.299999999999997 354.8 L26.599999999999998 354.8 Z" fill="#20d040" stroke="#000" stroke-width="0.9" stroke-linejoin="round"/>
<path d="M40 351.2 L42.5 348.4 L43.5 350 H46 L47 348.4 L49.5 351.2 L47 353.6 L46 352.4 H43.5 L42.5 353.6 Z" fill="#20d040" stroke="#000" stroke-width="0.9" stroke-linejoin="round"/>
<rect x="36.8" y="356.6" width="16.4" height="9" rx="1.5" fill="#d4d4d0" stroke="#101010" stroke-width="1.1"/>
<path d="M40.5 354 V360 M49.5 354 V360" stroke="#404040" stroke-width="0.7" stroke-dasharray="1 1"/>
<path d="M13.5 373.5 H16 V376.5 Q17 381.5 22.5 381.5 Q28 381.5 29 376.5 V373.5 H31.5" stroke="#402838" stroke-width="1.1" fill="none"/>
<path d="M21.2 370 H23.8 V375.8 H25.9 L22.5 379.2 L19.1 375.8 H21.2 Z" fill="#20d040" stroke="#000" stroke-width="0.9" stroke-linejoin="round"/>
<path d="M35 372.3 H53.5 M35 385.7 H53.5" stroke="#000" stroke-width="0.9"/>
<circle cx="37.5" cy="372.3" r="1.2" fill="#fff" stroke="#000" stroke-width="0.9"/>
<circle cx="49.5" cy="372.3" r="1.2" fill="#fff" stroke="#000" stroke-width="0.9"/>
<circle cx="37.5" cy="385.7" r="1.2" fill="#fff" stroke="#000" stroke-width="0.9"/>
<circle cx="43.5" cy="385.7" r="1.2" fill="#fff" stroke="#000" stroke-width="0.9"/>
<circle cx="49.5" cy="385.7" r="1.2" fill="#fff" stroke="#000" stroke-width="0.9"/>
<path d="M42.300000000000004 374.5 H44.9 V378.8 H47.800000000000004 L43.6 383 L39.4 378.8 H42.300000000000004 Z" fill="#20d040" stroke="#000" stroke-width="0.9" stroke-linejoin="round"/>
<path d="M14.4 407.5 V394 L16 391.5 H18.5 V397.5 L20.5 399 V407.5 Z M24.5 407.5 V398.5 L26.5 397 V391.5 H29 L30.8 394 V407.5 Z" fill="#dcdcdc" stroke="#000" stroke-width="1.1" stroke-linejoin="round"/>
<path d="M16.5 401.4 L19.3 398.59999999999997 L19.3 400.4 L23.7 400.4 L23.7 398.59999999999997 L26.5 401.4 L23.7 404.2 L23.7 402.4 L19.3 402.4 L19.3 404.2 Z" fill="#20d040" stroke="#000" stroke-width="0.9" stroke-linejoin="round"/>
<rect x="35.8" y="391.6" width="7" height="7" fill="#e0d0e0" stroke="#000" stroke-width="1"/><rect x="44.2" y="391.6" width="7" height="7" fill="#e0d0e0" stroke="#000" stroke-width="1"/><rect x="35.8" y="400.6" width="7" height="7" fill="#e0d0e0" stroke="#000" stroke-width="1"/><rect x="44.2" y="400.6" width="7" height="7" fill="#e0d0e0" stroke="#000" stroke-width="1"/>
<path d="M43.5 389.8 L46 392.5 H44.4 V398.6 H50.5 V397 L53.2 399.6 L50.5 402.2 V400.6 H44.4 V406.6 H46 L43.5 409.2 L41 406.6 H42.6 V400.6 H36.5 V402.2 L33.8 399.6 L36.5 397 V398.6 H42.6 V392.5 H41 Z" fill="#20d040" stroke="#000" stroke-width="0.7" stroke-linejoin="round"/>
<path d="M17.5 415.5 Q16 417.5 16 421.6 Q16 428 22.5 428 Q29 428 29 421.6 Q29 417.5 26.5 415.6" stroke="#000" stroke-width="4.4" fill="none"/><path d="M17.5 415.5 Q16 417.5 16 421.6 Q16 428 22.5 428 Q29 428 29 421.6 Q29 417.5 26.5 415.6" stroke="#888" stroke-width="2.2" fill="none"/>
<path d="M15 414 H22.5 V421 Z" fill="#888" stroke="#000" stroke-width="1" stroke-linejoin="round"/>
<path d="M49 415.5 Q50.5 417.5 50.5 421.6 Q50.5 428 44 428 Q37.5 428 37.5 421.6 Q37.5 417.5 40 415.6" stroke="#000" stroke-width="4.4" fill="none"/><path d="M49 415.5 Q50.5 417.5 50.5 421.6 Q50.5 428 44 428 Q37.5 428 37.5 421.6 Q37.5 417.5 40 415.6" stroke="#888" stroke-width="2.2" fill="none"/>
<path d="M51.5 414 H44 V421 Z" fill="#888" stroke="#000" stroke-width="1" stroke-linejoin="round"/>
<path d="M21 437 H24 V441.2 H28.4 V444.2 H24 V448.6 H21 V444.2 H16.6 V441.2 H21 Z" fill="#888" stroke="#000" stroke-width="1"/>
<rect x="38" y="441.2" width="11.6" height="3" fill="#888" stroke="#000" stroke-width="1"/>
<g fill="none" stroke-width="0.7" stroke-linejoin="round" stroke-linecap="round"><path d="M17 463 H27 M17 463 L19.5 461 M17 463 L19.5 465 M16 468 L20 458 M20 470 L25 458" stroke="#fff" transform="translate(1,1)"/><path d="M17 463 H27 M17 463 L19.5 461 M17 463 L19.5 465 M16 468 L20 458 M20 470 L25 458" stroke="#8c8a84"/></g>
<g fill="none" stroke-width="0.7" stroke-linejoin="round" stroke-linecap="round"><path d="M39 463 H49 M49 463 L46.5 461 M49 463 L46.5 465 M41 470 L46 458 M38 468 L43 458" stroke="#fff" transform="translate(1,1)"/><path d="M39 463 H49 M49 463 L46.5 461 M49 463 L46.5 465 M41 470 L46 458 M38 468 L43 458" stroke="#8c8a84"/></g>
<path d="M8.4 1 H19.6 L21.6 5.8 V13 L19.4 16.4 L21.6 18.8 V21.8 H6.4 V18.8 L8.6 16.4 L6.2 13 V5.8 Z" fill="#2aa82a"/>
<g stroke="#8ee88e" stroke-width="2.2" fill="none" stroke-linecap="round"><path d="M9.6 1.8 L12 4.2 M7.6 7.6 L12.4 10.6 M8 11.4 L12.4 14.4 M9.4 15.6 L12.4 18.4 M7.6 19.8 L10.6 21.2"/><path d="M16.4 2 L18.6 2 M18.8 7.6 Q20.6 10.4 19 13.6 M16.2 9 Q16.6 14 17.6 17 M19.4 19.6 L20.6 21"/></g>
<path d="M14 5 V21" stroke="#0a6010" stroke-width="1.8"/><circle cx="14" cy="8.5" r="1.6" fill="#064008"/>
<path d="M90.8 56.4 H109.7" stroke="#000" stroke-width="1.1"/><path d="M97.4 51 V57" stroke="#000" stroke-width="1.1"/><path d="M97.4 57 V70" stroke="#3a3a80" stroke-width="1.2"/>
<path d="M98.8 58 V68.5 L101.3 66.3 L103.2 69.8 L105 68.8 L103.3 65.5 L106.5 65.3 Z" fill="#fff" stroke="#30307a" stroke-width="0.9" stroke-linejoin="round"/>
<rect x="115" y="53.4" width="11.2" height="9.8" fill="#c8c8c8" stroke="#000" stroke-width="1.3"/>
<g font-family="Liberation Sans" font-weight="bold" font-size="5.6" fill="#000"><text x="115.8" y="58.6">1</text><text x="127.4" y="58">2</text><text x="115.4" y="68.6">3</text><text x="127" y="68.6">4</text></g>
<path d="M136.8 66.4 V60 L138 58.4 V54 H140.6 Q141.2 56.2 143.6 56.2 Q146 56.2 146.6 54 H149.4 V58.4 L150.6 60 V66.4 Z" fill="#fff" stroke="#000" stroke-width="1.3" stroke-linejoin="round"/>
<rect x="183.0" y="53.0" width="1.3" height="1.3" fill="#8a8880"/>
<rect x="183.0" y="57.4" width="1.3" height="1.3" fill="#8a8880"/>
<rect x="183.0" y="61.8" width="1.3" height="1.3" fill="#8a8880"/>
<rect x="183.0" y="66.2" width="1.3" height="1.3" fill="#8a8880"/>
<rect x="187.4" y="53.0" width="1.3" height="1.3" fill="#8a8880"/>
<rect x="187.4" y="57.4" width="1.3" height="1.3" fill="#8a8880"/>
<rect x="187.4" y="61.8" width="1.3" height="1.3" fill="#8a8880"/>
<rect x="187.4" y="66.2" width="1.3" height="1.3" fill="#8a8880"/>
<rect x="191.8" y="53.0" width="1.3" height="1.3" fill="#8a8880"/>
<rect x="191.8" y="57.4" width="1.3" height="1.3" fill="#8a8880"/>
<rect x="191.8" y="61.8" width="1.3" height="1.3" fill="#8a8880"/>
<rect x="191.8" y="66.2" width="1.3" height="1.3" fill="#8a8880"/>
<rect x="196.2" y="53.0" width="1.3" height="1.3" fill="#8a8880"/>
<rect x="196.2" y="57.4" width="1.3" height="1.3" fill="#8a8880"/>
<rect x="196.2" y="61.8" width="1.3" height="1.3" fill="#8a8880"/>
<rect x="196.2" y="66.2" width="1.3" height="1.3" fill="#8a8880"/>
<rect x="202" y="50" width="20" height="20" fill="#f4f4f2"/>
<path d="M205.8 52.8 V67.6 M205.6 52.8 H221 M209.5 52.8 V67.6 M205.6 56.5 H221 M213.2 52.8 V67.6 M205.6 60.2 H221 M216.9 52.8 V67.6 M205.6 63.9 H221 M220.6 52.8 V67.6 M205.6 67.6 H221" stroke="#787878" stroke-width="1.1"/>
<rect x="248.2" y="58.8" width="13.6" height="3.4" fill="#e4e08c" stroke="#101008" stroke-width="1"/>
<path d="M251 59 V60.2 M254 59 V60.2 M257 59 V60.2 M260 59 V60.2" stroke="#202010" stroke-width="0.6"/>
<rect x="275" y="53.5" width="3.6" height="13.6" fill="#e4e08c" stroke="#101008" stroke-width="1"/>
<path d="M275.2 56.5 H276.4 M275.2 59.5 H276.4 M275.2 62.5 H276.4 M275.2 65.5 H276.4" stroke="#202010" stroke-width="0.6"/>
<path d="M314.6 66 H321 V59 H328.3 V51.6 H335" stroke="#0a2a10" stroke-width="3.2" fill="none" stroke-linejoin="miter"/><path d="M314.6 66 H321 V59 H328.3 V51.6 H335" stroke="#40b050" stroke-width="1.2" fill="none"/>
<path d="M314.8 66 L315.4 69.5" stroke="#0a2a10" stroke-width="1.2"/>
<path d="M337.3 67.6 V61.4 H344.5 V54.6 H351.4 V50.2" stroke="#101010" stroke-width="1.3" fill="none"/>
<circle cx="341.3" cy="65.8" r="2.4" fill="#e8a050" stroke="#5a2a08" stroke-width="1"/>
<circle cx="348.6" cy="58.8" r="2.4" fill="#e8a050" stroke="#5a2a08" stroke-width="1"/>
<circle cx="355.3" cy="51.9" r="2" fill="#e8a050" stroke="#5a2a08" stroke-width="1"/>
<path d="M362 53.4 H375.7 M362 66.8 H375.7" stroke="#d01818" stroke-width="1.6"/>
<path d="M362 60 L366.8 55.5 V58.2 H375.2 V61.7 H366.8 V64.6 Z" fill="#50e050" stroke="#081808" stroke-width="1" stroke-linejoin="round"/>
<path d="M382.6 67 V59.6 H384.3 V52.4 H386.6 Q387.6 55.2 389.7 55.2 Q391.8 55.2 392.6 52.4 H395 V59.6 H396.6 V67 Z" fill="#18b838" stroke="#000" stroke-width="1.3" stroke-linejoin="miter"/>
<path d="M383.6 62.6 L386 60 L389.6 63.2 L393 60 L395.8 62.6 V66.2 H383.6 Z" fill="#20e0e8"/>
<path d="M383.6 65.2 L386 62.8 L389.6 65.6 L393 62.8 L395.8 65.2 V66.2 H383.6 Z" fill="#10a060"/>
<path d="M385.5 57.5 L389.7 60 L393.5 57.5" stroke="#10d040" stroke-width="1" fill="none"/>
<circle cx="439.6" cy="57.8" r="5.4" fill="#e0e0dc" stroke="#000" stroke-width="1.5"/><path d="M436 61.8 L430 67" stroke="#000" stroke-width="2.6" stroke-linecap="round"/><path d="M435.6 62.2 L430.6 66.6" stroke="#d8d8d8" stroke-width="0.8"/>
<circle cx="460.4" cy="57.8" r="3" fill="#e0e0dc" stroke="#000" stroke-width="1.3"/><path d="M458.4 60 L455 63.6" stroke="#000" stroke-width="2" stroke-linecap="round"/>
<path d="M472.8 67 V59.6 H474.8 V52.2 H479.4 Q480 54.6 481.2 54.6 Q482.4 54.6 483 52.2 H487 V59.6 H488.2 V67 Z" fill="#dcdcd6" stroke="#9a9a94" stroke-width="1.1"/>
<circle cx="478.9" cy="61" r="3.7" fill="#e8e8e4" stroke="#000" stroke-width="1.4"/><path d="M476.2 63.8 L472.6 67.8" stroke="#000" stroke-width="2" stroke-linecap="round"/>
<g fill="#dcdcd6" stroke="#9a9a94" stroke-width="1.1"><rect x="498.4" y="51.4" width="7" height="5.6"/><rect x="492.6" y="57" width="5.8" height="5"/><rect x="506.6" y="57.2" width="4.4" height="4.6"/><rect x="498.4" y="62.4" width="7" height="5.4"/></g>
<circle cx="500" cy="61" r="3.7" fill="#e8e8e4" stroke="#000" stroke-width="1.4"/><path d="M497.3 63.8 L493.3 67.8" stroke="#000" stroke-width="2" stroke-linecap="round"/>
<rect x="516" y="50" width="19" height="19" fill="#e4e2dc"/>
<path d="M518.5 51 V61.4 H519.6 M533.6 51 V61.4 H532.4" stroke="#303030" stroke-width="1" fill="none"/>
<path d="M520 69.4 V63.6 H521.4 V52 H523.2 Q523.8 55.6 526.2 55.6 Q528.6 55.6 529.2 52 H531 V63.6 H532.6 V69.4 Z" fill="#c8c8c8" stroke="#000" stroke-width="1.3" stroke-linejoin="round"/>
<circle cx="526.2" cy="57" r="1.6" fill="#f4f4f4"/>
<path d="M565.4 66.9 V59.5 L566.5 58 V52.4 H569.8 L571 54.5 H575 L576.2 52.4 H579.6 V58 L580.8 59.5 V66.9 Z" fill="#dcdce0" stroke="#000" stroke-width="1.2" stroke-linejoin="round"/>
<path d="M573 50.8 V68.8" stroke="#303070" stroke-width="1.3"/><circle cx="573" cy="54.6" r="0.9" fill="#303070"/>
<path d="M587.6 66.8 V53.4 H601.6 V56.4 H598.5 V63.4 H601.6 V66.8 Z" fill="#e0e0e4" stroke="#000" stroke-width="1.2" stroke-linejoin="miter"/>
<path d="M590 57 H597 M590 62 H597" stroke="#b8b8c0" stroke-width="0.8"/>
<path d="M585 59.8 H603.5" stroke="#303070" stroke-width="1.3"/><circle cx="599.3" cy="59.8" r="0.9" fill="#303070"/></svg>
</body></html>
